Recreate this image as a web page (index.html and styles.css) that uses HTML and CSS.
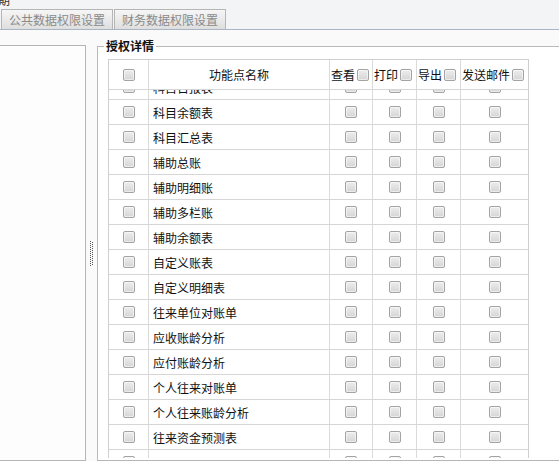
FILE: index.html
```html
<!DOCTYPE html>
<html lang="zh-CN">
<head>
<meta charset="utf-8">
<title>数据权限设置</title>
<link rel="stylesheet" href="styles.css">
</head>
<body>
<div class="top">
  <div class="title"><span>期</span></div>
  <div class="tabs">
    <div class="tab">公共数据权限设置</div>
    <div class="tab">财务数据权限设置</div>
  </div>
</div>
<div class="main">
  <div class="left"></div>
  <div class="splitter"><div class="grip"></div></div>
  <div class="right">
    <fieldset class="auth">
      <legend>授权详情</legend>
      <div class="grid head">
        <div class="c"><i class="cb"></i></div>
        <div class="t">功能点名称</div>
        <div class="h">查看<i class="cb"></i></div>
        <div class="h">打印<i class="cb"></i></div>
        <div class="h">导出<i class="cb"></i></div>
        <div class="h">发送邮件<i class="cb"></i></div>
      </div>
      <div class="scroll">
        <div class="grid rows">
          <div class="c"><i class="cb"></i></div><div class="n">科目日报表</div><div class="c"><i class="cb"></i></div><div class="c"><i class="cb"></i></div><div class="c"><i class="cb"></i></div><div class="c"><i class="cb"></i></div>
          <div class="c"><i class="cb"></i></div><div class="n">科目余额表</div><div class="c"><i class="cb"></i></div><div class="c"><i class="cb"></i></div><div class="c"><i class="cb"></i></div><div class="c"><i class="cb"></i></div>
          <div class="c"><i class="cb"></i></div><div class="n">科目汇总表</div><div class="c"><i class="cb"></i></div><div class="c"><i class="cb"></i></div><div class="c"><i class="cb"></i></div><div class="c"><i class="cb"></i></div>
          <div class="c"><i class="cb"></i></div><div class="n">辅助总账</div><div class="c"><i class="cb"></i></div><div class="c"><i class="cb"></i></div><div class="c"><i class="cb"></i></div><div class="c"><i class="cb"></i></div>
          <div class="c"><i class="cb"></i></div><div class="n">辅助明细账</div><div class="c"><i class="cb"></i></div><div class="c"><i class="cb"></i></div><div class="c"><i class="cb"></i></div><div class="c"><i class="cb"></i></div>
          <div class="c"><i class="cb"></i></div><div class="n">辅助多栏账</div><div class="c"><i class="cb"></i></div><div class="c"><i class="cb"></i></div><div class="c"><i class="cb"></i></div><div class="c"><i class="cb"></i></div>
          <div class="c"><i class="cb"></i></div><div class="n">辅助余额表</div><div class="c"><i class="cb"></i></div><div class="c"><i class="cb"></i></div><div class="c"><i class="cb"></i></div><div class="c"><i class="cb"></i></div>
          <div class="c"><i class="cb"></i></div><div class="n">自定义账表</div><div class="c"><i class="cb"></i></div><div class="c"><i class="cb"></i></div><div class="c"><i class="cb"></i></div><div class="c"><i class="cb"></i></div>
          <div class="c"><i class="cb"></i></div><div class="n">自定义明细表</div><div class="c"><i class="cb"></i></div><div class="c"><i class="cb"></i></div><div class="c"><i class="cb"></i></div><div class="c"><i class="cb"></i></div>
          <div class="c"><i class="cb"></i></div><div class="n">往来单位对账单</div><div class="c"><i class="cb"></i></div><div class="c"><i class="cb"></i></div><div class="c"><i class="cb"></i></div><div class="c"><i class="cb"></i></div>
          <div class="c"><i class="cb"></i></div><div class="n">应收账龄分析</div><div class="c"><i class="cb"></i></div><div class="c"><i class="cb"></i></div><div class="c"><i class="cb"></i></div><div class="c"><i class="cb"></i></div>
          <div class="c"><i class="cb"></i></div><div class="n">应付账龄分析</div><div class="c"><i class="cb"></i></div><div class="c"><i class="cb"></i></div><div class="c"><i class="cb"></i></div><div class="c"><i class="cb"></i></div>
          <div class="c"><i class="cb"></i></div><div class="n">个人往来对账单</div><div class="c"><i class="cb"></i></div><div class="c"><i class="cb"></i></div><div class="c"><i class="cb"></i></div><div class="c"><i class="cb"></i></div>
          <div class="c"><i class="cb"></i></div><div class="n">个人往来账龄分析</div><div class="c"><i class="cb"></i></div><div class="c"><i class="cb"></i></div><div class="c"><i class="cb"></i></div><div class="c"><i class="cb"></i></div>
          <div class="c"><i class="cb"></i></div><div class="n">往来资金预测表</div><div class="c"><i class="cb"></i></div><div class="c"><i class="cb"></i></div><div class="c"><i class="cb"></i></div><div class="c"><i class="cb"></i></div>
          <div class="c"><i class="cb"></i></div><div class="n"></div><div class="c"><i class="cb"></i></div><div class="c"><i class="cb"></i></div><div class="c"><i class="cb"></i></div><div class="c"><i class="cb"></i></div>
        </div>
      </div>
    </fieldset>
  </div>
</div>
</body>
</html>
```

FILE: styles.css
```css
html, body {
  margin: 0;
  padding: 0;
}
body {
  width: 559px;
  height: 464px;
  overflow: hidden;
  background: #fff;
  color: #111;
  font-family: "Noto Sans CJK SC", "Liberation Sans", sans-serif;
  font-size: 12px;
}

.top {
  background: #f3f4f6;
  border-bottom: 1px solid #a9b5c2;
}
.title {
  height: 9px;
  overflow: hidden;
}
.title span {
  display: block;
  line-height: 12px;
  margin-top: -6px;
  margin-left: -2px;
  color: #333;
}
.tabs {
  display: flex;
  gap: 1px;
  padding-left: 1px;
  height: 20px;
}
.tab {
  width: 112px;
  height: 20px;
  box-sizing: border-box;
  border: 1px solid #b5b5b5;
  border-bottom: none;
  background: linear-gradient(#f6f6f6, #dedede);
  color: #8a8a8a;
  display: flex;
  align-items: center;
  justify-content: center;
  line-height: 1;
  padding-top: 1px;
}

.main {
  display: flex;
  height: 431px;
  background: #fafafa;
}
.left {
  width: 86px;
  box-sizing: border-box;
  margin-top: 15px;
  border-top: 1px solid #b5b5b5;
  border-right: 1px solid #b5b5b5;
  border-bottom: 1px solid #b5b5b5;
  background: #fdfdfd;
}
.splitter {
  width: 11px;
  margin-top: 15px;
  display: flex;
  align-items: center;
  justify-content: center;
}
.grip {
  width: 3px;
  height: 25px;
  background-image:
    repeating-linear-gradient(#555 0 1px, transparent 1px 2px),
    repeating-linear-gradient(#555 0 1px, transparent 1px 2px);
  background-size: 1px 100%, 1px 100%;
  background-position: 0 0, 2px 1px;
  background-repeat: no-repeat;
}
.right {
  flex: 1;
  min-width: 0;
  overflow: hidden;
  box-sizing: border-box;
  border-bottom: 1px solid #b5b5b5;
}

.auth {
  margin: 9px 0 0 0;
  padding: 6px 0 0 10px;
  border: 1px solid #b9b9b9;
  width: 520px;
  height: 600px;
  min-width: 0;
  background: #fff;
}
.auth legend {
  margin-left: -4px;
  padding: 0 2px;
  font-weight: bold;
  font-size: 12px;
  line-height: 14px;
  color: #111;
}

.grid {
  display: grid;
  grid-template-columns: 40px 181px 43px 44px 44px 68px;
  width: 421px;
  box-sizing: border-box;
  border-left: 1px solid #cfcfcf;
}
.grid > div {
  box-sizing: border-box;
  border-right: 1px solid #dadada;
  border-bottom: 1px solid #d6d6d6;
  display: flex;
  align-items: center;
  white-space: nowrap;
}
.grid > div:nth-child(6n) {
  border-right-color: #cfcfcf;
}
.head {
  border-top: 1px solid #cfcfcf;
}
.head > div {
  height: 30px;
}
.scroll {
  height: 368px;
  overflow: hidden;
}
.rows {
  margin-top: -15px;
}
.rows > div {
  height: 25px;
}

.c {
  justify-content: center;
}
.t {
  justify-content: center;
}
.n {
  padding-left: 4px;
}
.h {
  padding-left: 1px;
  gap: 2px;
}

.cb {
  display: inline-block;
  width: 12px;
  height: 12px;
  box-sizing: border-box;
  border: 1px solid #a3a3a3;
  border-radius: 2px;
  background: linear-gradient(#ededed, #d5d5d5);
  box-shadow: inset 0 0 0 1px rgba(255, 255, 255, 0.55);
  flex: none;
}
```
